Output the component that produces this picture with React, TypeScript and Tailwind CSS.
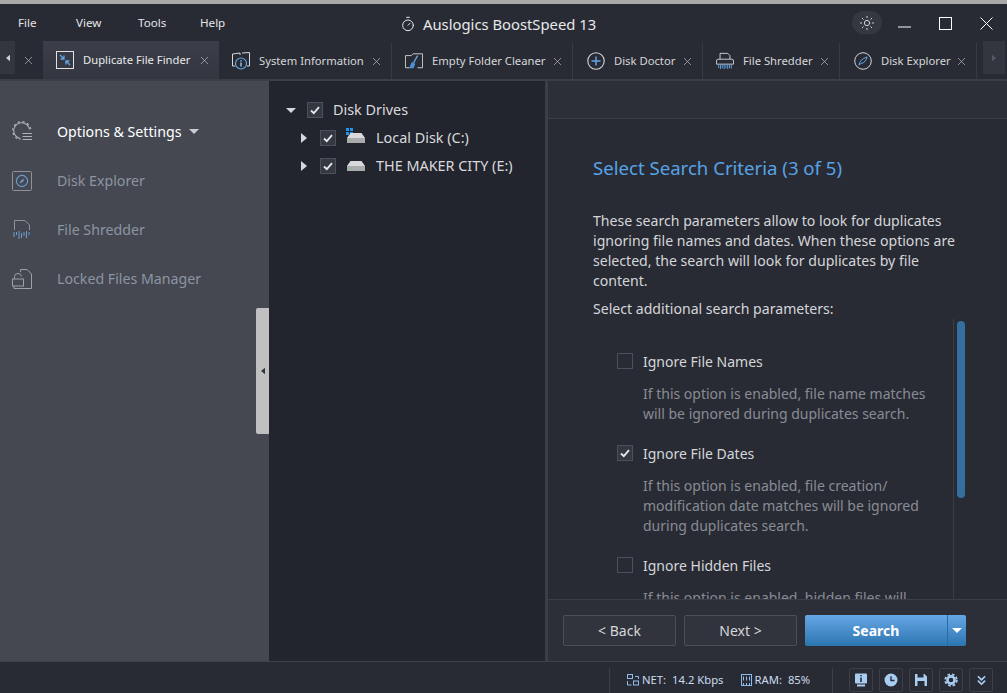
import { X, Sun, Timer, ChevronsDown } from 'lucide-react';

const font = 'font-["Noto_Sans",sans-serif]';

function Caret({ dir, className = '' }: { dir: 'down' | 'right' | 'left'; className?: string }) {
  const points = dir === 'down' ? '0,0 10,0 5,5' : dir === 'right' ? '0,0 6,5 0,10' : '6,0 0,5 6,10';
  const w = dir === 'down' ? 10 : 6;
  const h = dir === 'down' ? 5 : 10;
  return (
    <svg width={w} height={h} viewBox={`0 0 ${w} ${h}`} className={`shrink-0 fill-current ${className}`}>
      <polygon points={points} />
    </svg>
  );
}

function Check({ checked = true }: { checked?: boolean }) {
  return (
    <div className={`flex h-4 w-4 shrink-0 items-center justify-center border border-[#4d505a] ${checked ? 'bg-[#353741]' : 'bg-transparent'}`}>
      {checked && (
        <svg width="10" height="9" viewBox="0 0 10 9" fill="none" stroke="#e8e9ea" strokeWidth="1.8">
          <path d="M1 4.5 L3.8 7.2 L9 1.2" />
        </svg>
      )}
    </div>
  );
}

function DuplicateIcon() {
  return (
    <svg width="18" height="18" viewBox="0 0 18 18" fill="none">
      <rect x="0.5" y="0.5" width="17" height="17" stroke="#dfe1e4" />
      <path d="M4 4 L8 8 M8 4.6 V8 H4.6" stroke="#63a6e4" strokeWidth="1.3" />
      <path d="M14 14 L10 10 M10 13.4 V10 H13.4" stroke="#63a6e4" strokeWidth="1.3" />
    </svg>
  );
}

function SysInfoIcon() {
  return (
    <svg width="18" height="18" viewBox="0 0 18 18" fill="none">
      <path d="M0.5 2 L8 1 V3 M10 1 L17.5 0.5 V14 H15 M0.5 2 V14 H3" stroke="#d5d7da" />
      <circle cx="9" cy="11.5" r="5.5" stroke="#63a6e4" strokeWidth="1.2" />
      <path d="M9 10.5 V14.5 M9 8.2 V9.4" stroke="#9ccbf2" strokeWidth="1.4" />
    </svg>
  );
}

function FolderBroomIcon() {
  return (
    <svg width="20" height="18" viewBox="0 0 20 18" fill="none">
      <path d="M0.5 16.5 V3 H7 L9 1 H19.5 V16.5 H14 M0.5 16.5 H5" stroke="#d5d7da" />
      <path d="M14 3 L9.5 11" stroke="#63a6e4" strokeWidth="1.5" />
      <path d="M7.5 10 L11.5 12 L9.5 17 H4.5 Z" fill="#4d90cf" />
    </svg>
  );
}

function PlusCircleIcon() {
  return (
    <svg width="18" height="18" viewBox="0 0 18 18" fill="none">
      <circle cx="9" cy="9" r="8.2" stroke="#d5d7da" strokeWidth="1.1" />
      <path d="M9 4.5 V13.5 M4.5 9 H13.5" stroke="#63a6e4" strokeWidth="1.5" />
    </svg>
  );
}

function ShredderIcon() {
  return (
    <svg width="20" height="18" viewBox="0 0 20 18" fill="none">
      <path d="M4.5 7 V0.5 H13 L15.5 3 V7" stroke="#d5d7da" />
      <path d="M2.5 7 H17.5 Q19.5 7 19.5 9 V12.5 H0.5 V9 Q0.5 7 2.5 7 Z" stroke="#d5d7da" />
      <path d="M3 13 V17 M5 13 V18 M7 13 V17 M9 13 V18 M11 13 V17 M13 13 V18 M15 13 V17 M17 13 V17.5" stroke="#63a6e4" />
    </svg>
  );
}

function CompassIcon() {
  return (
    <svg width="20" height="20" viewBox="0 0 20 20" fill="none">
      <circle cx="10" cy="10" r="9.2" stroke="#d5d7da" strokeWidth="1.1" />
      <path d="M14.5 5.5 Q13.5 11.5 7.5 13 L5.5 14.5 Q6.5 8 14.5 5.5 Z" stroke="#63a6e4" strokeWidth="1.1" />
    </svg>
  );
}

function TabClose() {
  return <X size={13} strokeWidth={1.2} className="shrink-0 text-[#c6c8cc]" />;
}

function Tab({
  icon,
  label,
  width,
  pad = 'pl-[13px]',
  active = false,
}: {
  icon: React.ReactNode;
  label: string;
  width: string;
  pad?: string;
  active?: boolean;
}) {
  return (
    <div
      className={`flex shrink-0 items-center pr-2 ${width} ${pad} ${
        active ? 'h-full bg-gradient-to-b from-[#3c3f49] to-[#33353f]' : 'h-[36px] self-end border-r border-[#383a44]'
      }`}
    >
      <div className="flex w-[18px] shrink-0 items-center justify-center">{icon}</div>
      <span className={`ml-[9px] flex-1 whitespace-nowrap text-[11.25px] ${active ? 'text-[#e9eaec]' : 'text-[#d5d7da]'}`}>{label}</span>
      <TabClose />
    </div>
  );
}

function GearListIcon() {
  return (
    <svg width="20" height="21" viewBox="0 0 20 21" fill="none" stroke="#aeb1b6">
      <path d="M17.6 8.4 A8 8 0 1 0 8.4 17.6" strokeWidth="1.1" />
      <path d="M18.6 8.2 A9 9 0 1 0 8.2 18.6" strokeWidth="1.3" strokeDasharray="2.2 2.6" />
      <path d="M10.5 12.5 H20 M10.5 15.5 H20 M10.5 18.5 H20" strokeWidth="1.1" />
    </svg>
  );
}

function SideCompassIcon() {
  return (
    <svg width="20" height="20" viewBox="0 0 20 20" fill="none">
      <rect x="0.5" y="0.5" width="19" height="19" rx="1" stroke="#8f929a" />
      <circle cx="10" cy="10" r="5.6" stroke="#6b9fd0" strokeWidth="1.1" />
      <path d="M12.5 7.5 L9 9.5 L7.5 12.5 L11 10.8 Z" fill="#6b9fd0" />
    </svg>
  );
}

function SideShredIcon() {
  return (
    <svg width="18" height="20" viewBox="0 0 18 20" fill="none">
      <path d="M1.5 10 V0.5 H12 L16.5 5 V10" stroke="#8f929a" />
      <path d="M1 12 V17 M3.5 12 V15 M6 11 V19 M8.5 13 V18 M11 12 V16 M13.5 11 V18 M16 12 V15" stroke="#6b9fd0" />
    </svg>
  );
}

function SideLockIcon() {
  return (
    <svg width="20" height="20" viewBox="0 0 20 20" fill="none" stroke="#9da0a6">
      <path d="M8.5 3 V0.5 H15 L19.5 5 V19.5 H2 V17" />
      <rect x="0.5" y="10" width="11" height="7" />
      <path d="M2.5 10 V7.5 Q2.5 4.5 6 4.5 Q9.5 4.5 9.5 7.5" />
    </svg>
  );
}

function SideItem({ icon, label, active = false }: { icon: React.ReactNode; label: string; active?: boolean }) {
  return (
    <div className="flex h-[49px] items-center pl-3">
      <div className="flex w-5 justify-center">{icon}</div>
      <span className={`ml-[25px] text-[14.2px] ${active ? 'text-white' : 'text-[#8c95a3]'}`}>{label}</span>
      {active && <Caret dir="down" className="ml-2 text-[#c9cbcf]" />}
    </div>
  );
}

function DriveIcon({ windows = false }: { windows?: boolean }) {
  return (
    <div className="relative h-5 w-[22px] shrink-0">
      {windows && (
        <div className="absolute -left-[1px] top-0 grid grid-cols-2 gap-[1px]">
          <div className="h-[3px] w-[3px] bg-[#1e97ea]" />
          <div className="h-[3px] w-[3px] bg-[#1e97ea]" />
          <div className="h-[3px] w-[3px] bg-[#1e97ea]" />
          <div className="h-[3px] w-[3px] bg-[#1e97ea]" />
        </div>
      )}
      <svg width="18" height="10" viewBox="0 0 18 10" className="absolute bottom-[5px] left-0">
        <path d="M3.5 0 H14.5 L18 5 H0 Z" fill="#d8d9da" />
        <rect x="0" y="5" width="18" height="5" fill="#a9abad" />
        <rect x="2.5" y="7" width="1.5" height="1" fill="#5fd35f" />
      </svg>
    </div>
  );
}

function TreeRow({ caret, label, indent, icon }: { caret: 'down' | 'right'; label: string; indent: string; icon?: React.ReactNode }) {
  return (
    <div className={`flex h-7 items-center ${indent}`}>
      <div className="flex w-[10px] justify-center text-[#d6d7da]">
        <Caret dir={caret} />
      </div>
      <div className="ml-[11px] flex items-center">
        <Check />
      </div>
      {icon ? <div className="ml-[11px]">{icon}</div> : null}
      <span className={`${icon ? 'ml-[7px]' : 'ml-[10px]'} whitespace-nowrap text-[14.4px] text-[#d9dadc]`}>{label}</span>
    </div>
  );
}

function Option({ label, desc, checked = false }: { label: string; desc: string[]; checked?: boolean }) {
  return (
    <div>
      <div className="flex h-5 items-center">
        <Check checked={checked} />
        <span className="ml-[10px] text-[14px] text-[#d4d6d9]">{label}</span>
      </div>
      <div className="mb-[19px] mt-[13px] pl-[26px] text-[14px] leading-[20px] text-[#888c94]">
        {desc.map((line) => (
          <div key={line} className="whitespace-nowrap">
            {line}
          </div>
        ))}
      </div>
    </div>
  );
}

function StatusButton({ children }: { children: React.ReactNode }) {
  return (
    <div className="flex h-6 w-6 items-center justify-center rounded-[2px] border border-[#3c3e48] text-[#a9cdf0]">{children}</div>
  );
}

export default function App() {
  return (
    <div className={`flex h-[693px] w-[1007px] flex-col overflow-hidden bg-[#292b34] ${font}`}>
      <div className="h-1 shrink-0 bg-[#a9a9a9]" />

      <div className="relative flex h-[37px] shrink-0 items-center bg-[#292b34]">
        <div className="flex items-center pl-[18px] text-[11.6px] text-[#e4e5e7]">
          <span className="w-[58px]">File</span>
          <span className="w-[62px]">View</span>
          <span className="w-[62px]">Tools</span>
          <span>Help</span>
        </div>
        <div className="absolute left-[400px] top-[9px] flex items-center gap-[7px] text-[14.8px] text-[#e7e8ea]">
          <Timer size={16} strokeWidth={1.5} />
          <span>Auslogics BoostSpeed 13</span>
        </div>
        <div className="absolute left-[852px] top-[7px] flex h-[23px] w-[30px] items-center justify-center rounded-full bg-[#353741]">
          <Sun size={16} strokeWidth={1.4} className="text-[#d9dadc]" />
        </div>
        <svg width="13" height="2" viewBox="0 0 13 2" className="absolute left-[898px] top-[22px]" fill="none" stroke="#fff">
          <path d="M0 1 H13" />
        </svg>
        <svg width="13" height="13" viewBox="0 0 13 13" className="absolute left-[939px] top-[13px]" fill="none" stroke="#fff">
          <rect x="0.5" y="0.5" width="12" height="12" />
        </svg>
        <svg width="13" height="13" viewBox="0 0 13 13" className="absolute left-[980px] top-[13px]" fill="none" stroke="#fff">
          <path d="M0.5 0.5 L12.5 12.5 M12.5 0.5 L0.5 12.5" />
        </svg>
      </div>

      <div className="flex h-[40px] shrink-0 items-stretch border-b-2 border-[#3b3d47] bg-[#292b34]">
        <div className="flex w-[43px] shrink-0 items-start">
          <div className="flex h-[33px] w-[15px] items-center justify-center bg-[#33353f] text-[#d0d1d4]">
            <Caret dir="left" className="h-2 w-1" />
          </div>
          <X size={13} strokeWidth={1.2} className="ml-[7px] mt-[13px] text-[#c6c8cc]" />
        </div>
        <Tab active width="w-[176px]" icon={<DuplicateIcon />} label="Duplicate File Finder" />
        <Tab width="w-[173px]" icon={<SysInfoIcon />} label="System Information" />
        <Tab width="w-[181px]" icon={<FolderBroomIcon />} label="Empty Folder Cleaner" />
        <Tab width="w-[130px]" pad="pl-[14px]" icon={<PlusCircleIcon />} label="Disk Doctor" />
        <Tab width="w-[137px]" icon={<ShredderIcon />} label="File Shredder" />
        <Tab width="w-[137px]" pad="pl-[14px]" icon={<CompassIcon />} label="Disk Explorer" />
        <div className="ml-[6px] flex h-[33px] w-[22px] items-center justify-center bg-[#33353f] text-[#565963]">
          <Caret dir="right" className="h-2 w-1" />
        </div>
      </div>

      <div className="flex min-h-0 flex-1">
        <div className="relative w-[269px] shrink-0 bg-[#454851] pt-[26px]">
          <SideItem active icon={<GearListIcon />} label="Options & Settings" />
          <SideItem icon={<SideCompassIcon />} label="Disk Explorer" />
          <SideItem icon={<SideShredIcon />} label="File Shredder" />
          <SideItem icon={<SideLockIcon />} label="Locked Files Manager" />
          <div className="absolute right-0 top-[227px] flex h-[126px] w-[13px] items-center justify-center rounded-l-[2px] bg-[#c0c0c0] text-[#33353f]">
            <Caret dir="left" className="h-2 w-1" />
          </div>
        </div>

        <div className="w-[276px] shrink-0 bg-[#23252e] pt-[15px]">
          <TreeRow caret="down" indent="pl-[17px]" label="Disk Drives" />
          <TreeRow caret="right" indent="pl-[30px]" icon={<DriveIcon windows />} label="Local Disk (C:)" />
          <TreeRow caret="right" indent="pl-[30px]" icon={<DriveIcon />} label="THE MAKER CITY (E:)" />
        </div>

        <div className="flex min-w-0 flex-1 flex-col border-l-[3px] border-[#3b3d47]">
          <div className="h-[38px] shrink-0 border-b border-[#3b3d47] bg-[#2d2f38]" />
          <div className="flex min-h-0 flex-1 flex-col overflow-hidden pl-[45px] pt-[36px]">
            <h1 className="text-[18.6px] font-normal leading-[26px] text-[#57a3e6]">Select Search Criteria (3 of 5)</h1>
            <p className="mt-[30px] w-[372px] text-[14.1px] leading-[20px] text-[#d4d6d9]">
              These search parameters allow to look for duplicates ignoring file names and dates. When these options are selected, the search will look for duplicates by file content.
            </p>
            <p className="mt-[8px] text-[14.1px] leading-[20px] text-[#d4d6d9]">Select additional search parameters:</p>
            <div className="relative min-h-0 flex-1 overflow-hidden pl-[24px] pt-[32px]">
              <Option label="Ignore File Names" desc={['If this option is enabled, file name matches', 'will be ignored during duplicates search.']} />
              <Option
                checked
                label="Ignore File Dates"
                desc={['If this option is enabled, file creation/', 'modification date matches will be ignored', 'during duplicates search.']}
              />
              <Option label="Ignore Hidden Files" desc={['If this option is enabled, hidden files will']} />
              <div className="absolute left-[360px] top-0 h-full w-px bg-[#3b3d47]" />
              <div className="absolute left-[364px] top-[2px] h-[177px] w-2 rounded-full bg-[#33709f]" />
            </div>
          </div>
          <div className="flex h-[62px] shrink-0 items-start border-t border-[#3b3d47] bg-[#2d2f38] pl-[15px] pt-[15px]">
            <div className="flex h-[31px] w-[113px] items-center justify-center rounded-[2px] border border-[#4c4e58] bg-[#31333d] text-[14px] text-[#d4d6d9]">
              &lt; Back
            </div>
            <div className="ml-2 flex h-[31px] w-[113px] items-center justify-center rounded-[2px] border border-[#4c4e58] bg-[#31333d] text-[14px] text-[#d4d6d9]">
              Next &gt;
            </div>
            <div className="ml-2 flex h-[31px] w-[161px] overflow-hidden rounded-[2px] bg-gradient-to-b from-[#66a6e6] to-[#2a76b0] text-white">
              <div className="flex flex-1 items-center justify-center border-r border-[#2a6c9f] text-[14px] font-bold">Search</div>
              <div className="flex w-[18px] items-center justify-center">
                <Caret dir="down" />
              </div>
            </div>
          </div>
        </div>
      </div>

      <div className="flex h-8 shrink-0 items-start border-t border-[#3f414b] bg-[#292b34] pt-[6px]">
        <div className="ml-[609px] h-[25px] w-px bg-[#3c3e48]" />
        <div className="ml-[17px] flex h-6 w-[181px] items-center whitespace-nowrap text-[11.25px] text-[#c9dcf0]">
          <svg className="shrink-0" width="12" height="12" viewBox="0 0 12 12" fill="none" stroke="#8dbdec">
            <rect x="0.5" y="0.5" width="5" height="4" />
            <rect x="6.5" y="7" width="5" height="4" />
            <path d="M8 2.5 H11.5 V5 M0.5 7 V11 H4.5" />
          </svg>
          <span className="ml-[3px]">NET:</span>
          <span className="ml-[6px]">14.2 Kbps</span>
          <svg className="ml-[17px] shrink-0" width="11" height="12" viewBox="0 0 11 12" fill="none" stroke="#8dbdec">
            <rect x="0.5" y="0.5" width="10" height="11" />
            <path d="M2.5 2.5 V6.5 M5.5 2.5 V6.5 M8.5 2.5 V6.5 M2.5 9 V11 M5.5 9 V11 M8.5 9 V11" />
          </svg>
          <span className="ml-[3px]">RAM:</span>
          <span className="ml-[6px]">85%</span>
        </div>
        <div className="ml-[24px] h-[25px] w-px bg-[#3c3e48]" />
        <div className="ml-4 flex gap-[6px]">
          <StatusButton>
            <svg width="14" height="14" viewBox="0 0 14 14">
              <rect x="1" y="0.5" width="12" height="10" rx="1" fill="currentColor" />
              <rect x="3" y="11.5" width="8" height="2" fill="currentColor" />
              <path d="M7 4.5 V9 M7 2 V3.3" stroke="#292b34" strokeWidth="1.6" />
            </svg>
          </StatusButton>
          <StatusButton>
            <svg width="14" height="14" viewBox="0 0 14 14">
              <circle cx="7" cy="7" r="6.5" fill="currentColor" />
              <path d="M7 3.2 V7.5 H10.5" fill="none" stroke="#292b34" strokeWidth="1.4" />
            </svg>
          </StatusButton>
          <StatusButton>
            <svg width="14" height="14" viewBox="0 0 14 14">
              <path d="M1 1 H10.5 L13 3.5 V13 H1 Z" fill="currentColor" />
              <rect x="3.5" y="1" width="6" height="3.5" fill="#292b34" />
              <rect x="3.5" y="8" width="7" height="5" fill="#292b34" />
            </svg>
          </StatusButton>
          <StatusButton>
            <svg width="14" height="14" viewBox="0 0 14 14" fill="none" stroke="currentColor">
              <circle cx="7" cy="7" r="3.6" strokeWidth="2.6" />
              <circle cx="7" cy="7" r="5.8" strokeWidth="1.8" strokeDasharray="2.6 2" />
            </svg>
          </StatusButton>
          <StatusButton>
            <ChevronsDown size={15} strokeWidth={2.8} />
          </StatusButton>
        </div>
      </div>
    </div>
  );
}
